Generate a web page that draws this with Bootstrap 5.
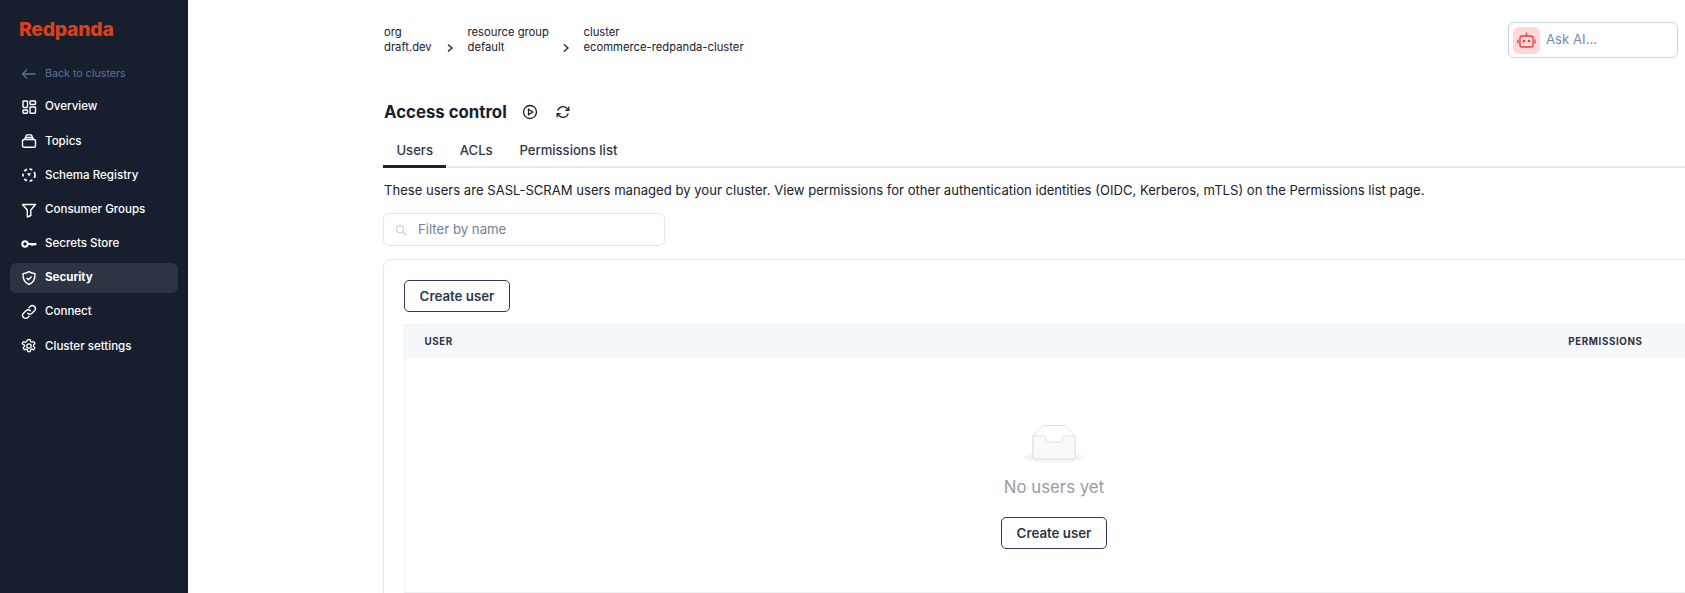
<!doctype html>
<html lang="en"><head><meta charset="utf-8"><title>Access control</title>
<link href="https://cdn.jsdelivr.net/npm/bootstrap@5.3.0/dist/css/bootstrap.min.css" rel="stylesheet">
<style>
html,body{height:100%;overflow:hidden}
body{font-family:Inter,"Noto Sans",sans-serif;color:#1a202c;font-size:13.1px;background:#fff}
.shell{height:593px;overflow:hidden}
.side{width:188px;flex:none;background:#171f2f;color:#fff;padding:0 10px}
.brand{font-weight:800;font-size:19.3px;line-height:26px;color:#dd4019;letter-spacing:-.2px;padding:16px 0 0 9px;height:59px}
.nav-row{display:flex;align-items:center;height:30px;margin-bottom:4.2px;padding-left:11px;border-radius:6px;color:#fff;font-size:11.55px;font-weight:500;text-decoration:none}
.nav-row svg{width:16px;height:16px;margin-right:8px;flex:none}
.nav-row.back{color:#5d7195;font-size:10.7px;font-weight:400;margin-bottom:3px}
.nav-row.on{background:#2c3444;font-weight:700}
.main{flex:1;min-width:0;position:relative;overflow:hidden}
.inner{width:1340px;margin-left:195px}
.crumbs{height:62px;padding:25px 0 0 1px;font-size:11.25px;line-height:15px;color:#1a202c}
.crumb-org{width:83.5px}.crumb-rg{width:116px}
.crumb-col{position:relative}
.sep{position:absolute;top:18px;right:13px;width:10px;height:10px}
.ask{position:absolute;top:22px;left:1320px;width:170px;height:36px;border:1px solid #c7d2e3;border-radius:6px;background:#fff;padding:4px;color:#6f8bb5;font-size:13.2px}
.botbox{width:27px;height:27px;background:#fed7d7;border-radius:6px;margin-right:6px}
.head{height:66px;padding:34px 0 0 1px}
.head h1{font-size:16.8px;font-weight:700;line-height:26px;margin:0 15px 0 0;color:#1a202c}
.head svg{width:16px;height:16px;margin-right:17px}
.tabrow{border-bottom:2px solid #e2e8f0;height:40px}
.tabbtn{height:40px;padding:0 13.4px;font-size:13.1px;color:#2d3748;line-height:44px;font-weight:500}
.tabbtn.on{border-bottom:3px solid #1a2233}
.intro{margin:12px 0 0 1px;font-size:13.1px;line-height:21px;height:33px;color:#1a202c;white-space:nowrap}
.filter{width:282px;height:33px;border:1px solid #e2e8f0;border-radius:6px;padding-left:11px;color:#718096;font-size:13.2px}
.filter svg{width:12px;height:12px;margin-right:11px}
.panel{margin-top:13px;border:1px solid #e2e8f0;border-radius:8px 0 0 0;padding:20px;height:345px;background:#fff}
.cta{display:block;width:106px;height:32px;line-height:29px;padding:0;border:1px solid #2d3a55;border-radius:5px;color:#2d3748;background:#fff;font-size:13.3px;font-weight:600;text-align:center}
.cta:hover{color:#2d3748;background:#fff;border-color:#2d3a55}
.tablebox{margin-top:12px;border:1px solid #edf2f7;height:269px}
.heading{height:34px;background:#f6f9fc;display:flex;align-items:center;justify-content:space-between;padding:0 19.5px;font-size:9.8px;font-weight:700;letter-spacing:.6px;color:#2d3142}
.heading span:last-child{margin-right:39px}
.empty{height:234px;text-align:center;padding-top:65px;margin-left:-1px}
.emptyin{width:1300px}
.empty svg{display:block;width:60px;height:39px;margin:0 auto}
.none{color:#9a9ca4;font-size:16.8px;line-height:24px;margin:12px 0 18px}
.emptyin .cta{margin:0 auto}
</style></head><body>
<div class="shell d-flex">
<aside class="side">
<div class="brand">Redpanda</div>
<a class="nav-row back" href="#"><svg viewBox="0 0 16 16" fill="none" stroke="#5d7195" stroke-width="1.3"><path d="M1.5 8h13M6 3.5 1.5 8 6 12.5"/></svg>Back to clusters</a>
<a class="nav-row" href="#"><svg viewBox="0 0 16 16" fill="none" stroke="#fff" stroke-width="1.4"><rect x="2" y="2" width="4.5" height="6.5" rx=".7"/><rect x="9" y="2" width="5.5" height="3.5" rx=".7"/><rect x="2" y="11" width="4.5" height="3.2" rx=".7"/><rect x="9" y="8" width="5.5" height="6.2" rx=".7"/></svg>Overview</a>
<a class="nav-row" href="#"><svg viewBox="0 0 16 16" fill="none" stroke="#fff" stroke-width="1.4"><path d="M4.6 5.500 5.200 2.600c.1-.4.4-.7.9-.7h3.800c.5 0 .8.3.9.7l.6 2.900"/><rect x="1.500" y="6.500" width="13" height="7.800" rx="1.600"/><path d="M3.600 6.500 4.400 4.500h7.200l.8 2"/></svg>Topics</a>
<a class="nav-row" href="#"><svg viewBox="0 0 16 16" fill="none" stroke="#fff" stroke-width="1.7"><circle cx="8" cy="8" r="6" stroke-dasharray="3 2.600"/><path d="M6 6.300h4L8 9.400z" fill="#fff" stroke="none"/></svg>Schema Registry</a>
<a class="nav-row" href="#"><svg viewBox="0 0 16 16" fill="none" stroke="#fff" stroke-width="1.4" stroke-linejoin="round"><path d="M1.500 2.500h13L9.800 8v5.500L6.300 15V8z"/></svg>Consumer Groups</a>
<a class="nav-row" href="#"><svg viewBox="0 0 16 16" fill="none" stroke="#fff" stroke-width="2"><circle cx="4" cy="8" r="2.700"/><path d="M6.800 8h8.700M11 8v1.800M13.600 8v1.500"/></svg>Secrets Store</a>
<a class="nav-row on" href="#"><svg viewBox="0 0 16 16" fill="none" stroke="#fff" stroke-width="1.4" stroke-linejoin="round"><path d="M8 1.600c2 1.400 3.800 1.900 6 2 .2 5-1.200 9-6 10.900C3.200 12.600 1.800 8.600 2 3.600c2.200-.1 4-.6 6-2z"/><path d="M5.600 8 7.400 9.800 10.600 6.400"/></svg>Security</a>
<a class="nav-row" href="#"><svg viewBox="0 0 16 16" fill="none" stroke="#fff" stroke-width="1.4" stroke-linecap="round"><path d="M6.700 9.300a3 3 0 0 0 4.300 0l2.500-2.500a3 3 0 0 0-4.300-4.300L8 3.700"/><path d="M9.300 6.700a3 3 0 0 0-4.300 0L2.500 9.200a3 3 0 0 0 4.300 4.300L8 12.300"/></svg>Connect</a>
<a class="nav-row" href="#"><svg viewBox="0 0 16 16" fill="none" stroke="#fff" stroke-width="1.3" stroke-linejoin="round"><path d="M6.800 1.600h2.400l.4 1.900 1.300.7 1.800-.7 1.200 2.100-1.400 1.300v1.500l1.400 1.300-1.200 2.100-1.800-.7-1.300.7-.4 1.900H6.800l-.4-1.900-1.300-.7-1.800.7-1.200-2.100 1.400-1.300V7.100L1.100 5.800l1.200-2.100 1.800.7 1.300-.7z"/><circle cx="8" cy="8" r="2.200"/></svg>Cluster settings</a>
</aside>
<main class="main">
<div class="inner">
<div class="crumbs d-flex">
<div class="crumb-col crumb-org"><div>org</div><div>draft.dev</div><svg class="sep" viewBox="0 0 10 10" fill="none" stroke="#1a202c" stroke-width="1.3"><path d="M3 1.500 7 5 3 8.500"/></svg></div>
<div class="crumb-col crumb-rg"><div>resource group</div><div>default</div><svg class="sep" viewBox="0 0 10 10" fill="none" stroke="#1a202c" stroke-width="1.3"><path d="M3 1.500 7 5 3 8.500"/></svg></div>
<div class="crumb-col"><div>cluster</div><div>ecommerce-redpanda-cluster</div></div>
</div>
<div class="head d-flex align-items-center">
<h1>Access control</h1>
<svg viewBox="0 0 16 16" fill="none" stroke="#1a202c" stroke-width="1.3"><circle cx="8" cy="8" r="6.500"/><path d="M6.500 5.300 10.700 8 6.500 10.700z" fill="none"/></svg>
<svg viewBox="0 0 16 16" fill="none" stroke="#1a202c" stroke-width="1.300"><path d="M2.800 6.700A5.300 5.300 0 0 1 12 4.500l1.600 1.800M13.200 9.300A5.300 5.300 0 0 1 4 11.500L2.400 9.700"/><path d="M13.800 2.800v3.500h-3.500M2.200 13.200V9.700h3.500"/></svg>
</div>
<div class="tabrow d-flex">
<div class="tabbtn on">Users</div><div class="tabbtn">ACLs</div><div class="tabbtn">Permissions list</div>
</div>
<p class="intro">These users are SASL-SCRAM users managed by your cluster. View permissions for other authentication identities (OIDC, Kerberos, mTLS) on the Permissions list page.</p>
<div class="filter d-flex align-items-center"><svg viewBox="0 0 12 12" fill="none" stroke="#cbd5e0" stroke-width="1.300"><circle cx="5" cy="5" r="3.700"/><path d="m8 8 3.200 3.200"/></svg>Filter by name</div>
<section class="panel">
<button type="button" class="btn cta">Create user</button>
<div class="tablebox">
<div class="heading"><span>USER</span><span>PERMISSIONS</span></div>
<div class="empty"><div class="emptyin">
<svg viewBox="0 0 60 39" fill="none"><ellipse cx="30" cy="33" rx="30" ry="6" fill="#f5f5f5"/><path d="M9 12 19 1.500h22L51 12v21a2 2 0 0 1-2 2H11a2 2 0 0 1-2-2z" fill="#fff" stroke="#e0e0e0" stroke-width="1"/><path d="M9 12h11c2 0 1.500 6 4 6h12c2.500 0 2-6 4-6h11v21a2 2 0 0 1-2 2H11a2 2 0 0 1-2-2z" fill="#fafafa" stroke="#e0e0e0" stroke-width="1"/></svg>
<div class="none">No users yet</div>
<button type="button" class="btn cta">Create user</button>
</div></div>
</div>
</section>
</div>
<div class="ask d-flex align-items-center"><span class="botbox d-flex align-items-center justify-content-center"><svg width="21" height="21" viewBox="0 0 21 21" fill="none" stroke="#e53e3e" stroke-width="1.300"><rect x="4" y="6" width="13" height="11" rx="2"/><path d="M10.500 6V2.500M2 9.500v4M19 9.500v4"/><circle cx="8" cy="11" r=".7" fill="#e53e3e"/><circle cx="13" cy="11" r=".7" fill="#e53e3e"/></svg></span>Ask AI...</div>
</main>
</div>
</body></html>
